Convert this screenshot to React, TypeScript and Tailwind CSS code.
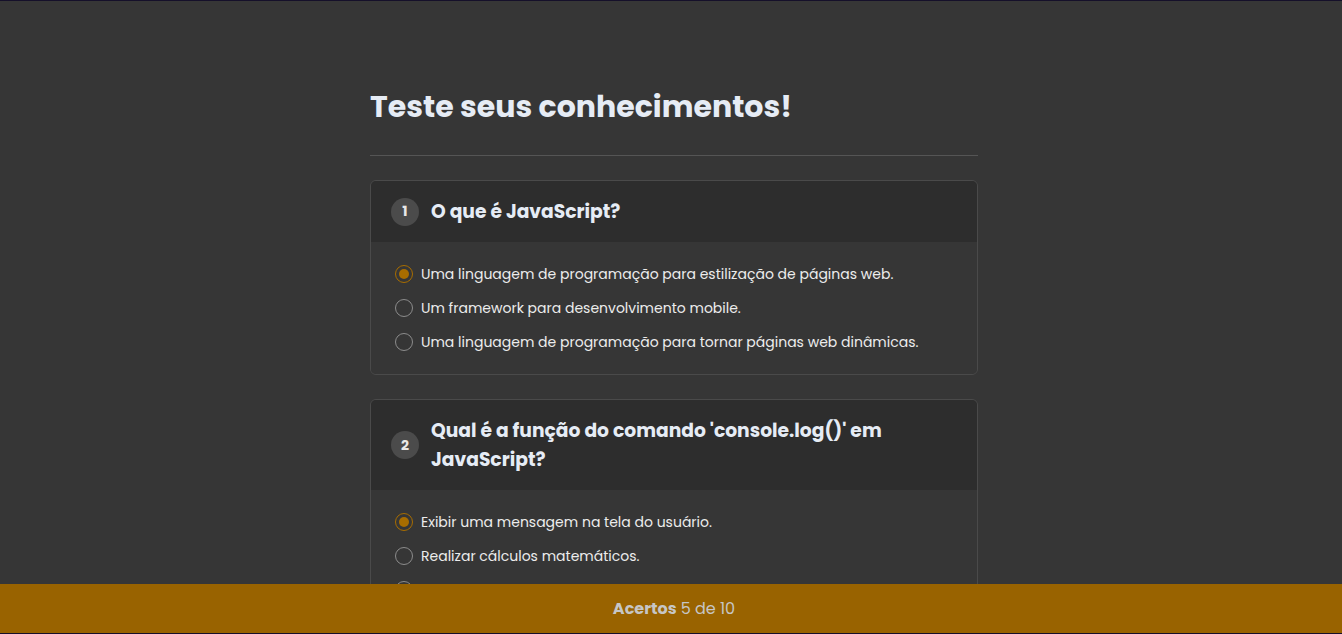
import React from "react";

type Question = {
  id: number;
  title: string;
  options: string[];
  selected: number;
};

const questions: Question[] = [
  {
    id: 1,
    title: "O que é JavaScript?",
    options: [
      "Uma linguagem de programação para estilização de páginas web.",
      "Um framework para desenvolvimento mobile.",
      "Uma linguagem de programação para tornar páginas web dinâmicas.",
    ],
    selected: 0,
  },
  {
    id: 2,
    title: "Qual é a função do comando 'console.log()' em JavaScript?",
    options: [
      "Exibir uma mensagem na tela do usuário.",
      "Realizar cálculos matemáticos.",
      "Imprimir uma mensagem no console do navegador.",
    ],
    selected: 0,
  },
];

const Radio: React.FC<{ checked: boolean }> = ({ checked }) => (
  <span
    className={`flex h-[18px] w-[18px] shrink-0 items-center justify-center rounded-full border ${
      checked ? "border-[#a86d00]" : "border-[#8c8c8c]"
    }`}
  >
    {checked && <span className="h-[10px] w-[10px] rounded-full bg-[#a86d00]" />}
  </span>
);

const QuestionCard: React.FC<{ q: Question }> = ({ q }) => (
  <div className="overflow-hidden rounded-md border border-[#4a4a4a]">
    {/* Cabeçalho da pergunta */}
    <div className="flex items-center gap-3 bg-[#2d2d2d] px-5 py-4">
      <span className="flex h-7 w-7 shrink-0 items-center justify-center rounded-full bg-[#4b4b4b] text-[14px] font-bold text-[#e8e8e8]">
        {q.id}
      </span>
      <h2 className="text-[18.7px] font-bold leading-[29px] text-[#e6ecf5]">{q.title}</h2>
    </div>

    {/* Alternativas */}
    <div className="flex flex-col bg-[#363636] px-6 pt-[15px] pb-[15px]">
      {q.options.map((opt, i) => (
        <label key={i} className="flex h-[34px] items-center gap-2 text-[14px] text-[#ececec]">
          <Radio checked={i === q.selected} />
          <span>{opt}</span>
        </label>
      ))}
    </div>
  </div>
);

const App: React.FC = () => {
  return (
    <div
      className="relative h-screen overflow-hidden border-t border-[#15102a] bg-[#363636]"
      style={{ fontFamily: "Poppins, 'DejaVu Sans', sans-serif" }}
    >
      <div className="flex justify-center pl-[6px]">
        <div className="w-[608px] pt-[88px]">
          <h1 className="text-[30px] font-bold leading-[36px] text-[#e6ecf5]">Teste seus conhecimentos!</h1>
          <div className="mt-[30px] mb-6 h-px bg-[#555555]" />

          <div className="flex flex-col gap-6">
            {questions.map((q) => (
              <QuestionCard key={q.id} q={q} />
            ))}
          </div>
        </div>
      </div>

      {/* Rodapé com acertos */}
      <div className="absolute inset-x-0 bottom-0 flex h-[50px] items-center justify-center border-b border-[#15102a] bg-[#996300] pl-[6px] text-[16px] text-[#c6c6c6]">
        <span className="font-bold">Acertos</span>
        <span className="ml-1">5 de 10</span>
      </div>
    </div>
  );
};

export default App;
